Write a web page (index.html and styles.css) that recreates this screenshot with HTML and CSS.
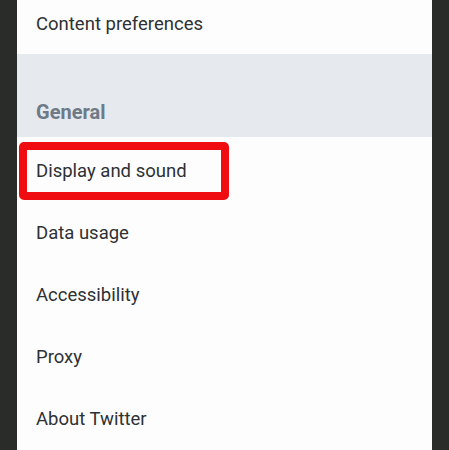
FILE: index.html
```html
<!DOCTYPE html>
<html>
<head>
<meta charset="utf-8">
<link rel="stylesheet" href="styles.css">
</head>
<body>
<div class="frame">
  <div class="panel">
    <div class="row top">Content preferences</div>
    <div class="section">
      <div class="section-title">General</div>
    </div>
    <div class="list">
      <div class="row highlighted"><span class="mark"></span>Display and sound</div>
      <div class="row">Data usage</div>
      <div class="row">Accessibility</div>
      <div class="row">Proxy</div>
      <div class="row">About Twitter</div>
    </div>
  </div>
</div>
</body>
</html>
```
FILE: styles.css
```css
html, body {
  margin: 0;
  padding: 0;
  background: #2a2c2a;
}
.frame {
  width: 449px;
  height: 450px;
  overflow: hidden;
  padding: 0 17px 0 17px;
  box-sizing: border-box;
  background: #2a2c2a;
}
.panel {
  background: #fdfdfd;
  height: 100%;
  font-family: Roboto, "Liberation Sans", sans-serif;
  color: #2e3134;
}
.row {
  position: relative;
  height: 62px;
  display: flex;
  align-items: center;
  padding-left: 19px;
  font-size: 18.5px;
}
.row.top {
  height: 54px;
  padding-bottom: 6px;
  box-sizing: border-box;
}
.section {
  background: #e6e9ee;
  height: 83px;
  display: flex;
  align-items: flex-end;
  padding-left: 19px;
  box-sizing: border-box;
  padding-bottom: 13px;
}
.section-title {
  font-size: 20px;
  font-weight: 700;
  color: #6f7a86;
}
.list {
  padding-top: 3px;
}
.mark {
  position: absolute;
  left: 2px;
  top: 2px;
  width: 210px;
  height: 58px;
  border: 8px solid #f00d12;
  border-radius: 5px;
  box-sizing: border-box;
}
```
